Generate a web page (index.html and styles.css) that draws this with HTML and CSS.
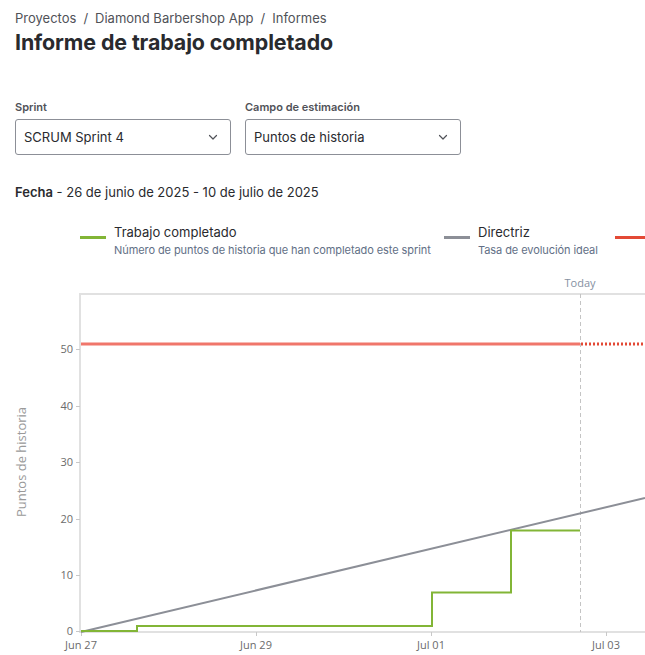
FILE: index.html
```html
<!DOCTYPE html>
<html lang="es">
<head>
<meta charset="utf-8">
<title>Informe de trabajo completado</title>
<link rel="stylesheet" href="styles.css">
</head>
<body>
<div class="page">
  <header class="header">
    <nav class="crumbs">
      <span>Proyectos</span><span class="sep">/</span><span>Diamond Barbershop App</span><span class="sep">/</span><span>Informes</span>
    </nav>
    <h1 class="title">Informe de trabajo completado</h1>
  </header>

  <section class="filters">
    <div class="field">
      <label class="field-label">Sprint</label>
      <div class="select">
        <span>SCRUM Sprint 4</span>
        <svg class="chev" width="12" height="12" viewBox="0 0 12 12"><path d="M2.5 4.5 L6 8 L9.5 4.5" fill="none" stroke="#505258" stroke-width="1.2" stroke-linecap="round" stroke-linejoin="round"/></svg>
      </div>
    </div>
    <div class="field">
      <label class="field-label">Campo de estimación</label>
      <div class="select">
        <span>Puntos de historia</span>
        <svg class="chev" width="12" height="12" viewBox="0 0 12 12"><path d="M2.5 4.5 L6 8 L9.5 4.5" fill="none" stroke="#505258" stroke-width="1.2" stroke-linecap="round" stroke-linejoin="round"/></svg>
      </div>
    </div>
  </section>

  <p class="date"><strong>Fecha</strong> - 26 de junio de 2025 - 10 de julio de 2025</p>

  <div class="legend">
    <div class="legend-item item-1">
      <span class="swatch green"></span>
      <div class="legend-text">
        <div class="legend-title">Trabajo completado</div>
        <div class="legend-sub">Número de puntos de historia que han completado este sprint</div>
      </div>
    </div>
    <div class="legend-item item-2">
      <span class="swatch gray"></span>
      <div class="legend-text">
        <div class="legend-title">Directriz</div>
        <div class="legend-sub">Tasa de evolución ideal</div>
      </div>
    </div>
    <div class="legend-item item-3">
      <span class="swatch red"></span>
    </div>
  </div>
</div>

<svg class="chart" width="645" height="390" viewBox="0 265 645 390">
  <g class="grid">
    <line x1="80" y1="294" x2="645" y2="294" stroke="#e1e1e1" stroke-width="2"/>
    <line x1="80" y1="293" x2="80" y2="633" stroke="#e1e1e1" stroke-width="2"/>
    <line x1="79" y1="632" x2="645" y2="632" stroke="#e1e1e1" stroke-width="2"/>
  </g>
  <g stroke="#c8c8c8" stroke-width="1">
    <line x1="76" y1="631.5" x2="80" y2="631.5"/>
    <line x1="76" y1="575.5" x2="80" y2="575.5"/>
    <line x1="76" y1="519.5" x2="80" y2="519.5"/>
    <line x1="76" y1="462.5" x2="80" y2="462.5"/>
    <line x1="76" y1="406.5" x2="80" y2="406.5"/>
    <line x1="76" y1="349.5" x2="80" y2="349.5"/>
    <line x1="81.5" y1="632" x2="81.5" y2="636"/>
    <line x1="256.5" y1="632" x2="256.5" y2="636"/>
    <line x1="431.5" y1="632" x2="431.5" y2="636"/>
    <line x1="606.5" y1="632" x2="606.5" y2="636"/>
  </g>
  <g class="ylabels">
    <text x="73" y="635">0</text>
    <text x="73" y="579">10</text>
    <text x="73" y="523">20</text>
    <text x="73" y="466">30</text>
    <text x="73" y="410">40</text>
    <text x="73" y="353">50</text>
  </g>
  <g class="xlabels">
    <text x="81" y="649">Jun 27</text>
    <text x="256" y="649">Jun 29</text>
    <text x="431" y="649">Jul 01</text>
    <text x="606" y="649">Jul 03</text>
  </g>
  <text class="ytitle" transform="translate(26 462) rotate(-90)">Puntos de historia</text>

  <line x1="580.5" y1="294" x2="580.5" y2="632" stroke="#c4c4c4" stroke-width="1" stroke-dasharray="4 3"/>
  <text class="today" x="580" y="287">Today</text>

  <line x1="81" y1="344" x2="580" y2="344" stroke="#f0766b" stroke-width="3"/>
  <line x1="581" y1="344" x2="645" y2="344" stroke="#e34935" stroke-width="3" stroke-dasharray="2 2"/>

  <line x1="81" y1="632" x2="645" y2="498" stroke="#8c8f97" stroke-width="2"/>

  <path d="M81 631 H137 V626 H432 V592.5 H511 V530.5 H580" fill="none" stroke="#82b536" stroke-width="2"/>
</svg>
</body>
</html>
```

FILE: styles.css
```css
html, body {
  margin: 0;
  padding: 0;
  background: #ffffff;
  overflow: hidden;
}

body {
  font-family: Inter, "Noto Sans", sans-serif;
  color: #292a2e;
}

.page {
  padding: 8px 15px 0 15px;
}

.crumbs {
  font-size: 13px;
  line-height: 20px;
  color: #505258;
  display: flex;
}

.sep {
  margin: 0 7px;
}

.title {
  margin: 0;
  font-size: 21.4px;
  line-height: 28px;
  font-weight: 700;
  color: #292a2e;
  letter-spacing: -0.1px;
}

.filters {
  display: flex;
  gap: 14px;
  margin-top: 43px;
}

.field {
  display: flex;
  flex-direction: column;
  gap: 4px;
}

.field-label {
  font-size: 11px;
  line-height: 16px;
  font-weight: 600;
  color: #505258;
}

.select {
  width: 216px;
  height: 36px;
  box-sizing: border-box;
  border: 1px solid #8c8f97;
  border-radius: 3px;
  display: flex;
  align-items: center;
  justify-content: space-between;
  padding: 0 11px 0 8px;
  font-size: 13px;
  color: #292a2e;
}

.chev {
  display: block;
}

.date {
  margin: 27px 0 0 0;
  font-size: 13px;
  line-height: 20px;
  color: #292a2e;
}

.date strong {
  font-weight: 600;
}

.legend {
  display: flex;
  margin-top: 21px;
  padding-left: 65px;
  white-space: nowrap;
}

.legend-item {
  display: flex;
  flex: none;
}

.item-1 { width: 364px; }
.item-2 { width: 171px; }

.swatch {
  flex: none;
  width: 26px;
  height: 3px;
  margin-top: 13px;
  margin-right: 8px;
}

.swatch.green { background: #82b536; }
.swatch.gray { background: #8c8f97; }
.swatch.red { background: #e34935; width: 40px; }

.legend-title {
  font-size: 13px;
  line-height: 18px;
  color: #292a2e;
}

.legend-sub {
  font-size: 11px;
  line-height: 16px;
  color: #626f86;
  margin-top: 1px;
  letter-spacing: -0.08px;
}

.chart {
  display: block;
  margin-top: 7px;
}

.chart text {
  font-family: "Open Sans", "Noto Sans", sans-serif;
  font-size: 11px;
  fill: #6b6b6b;
}

.ylabels text {
  text-anchor: end;
}

.xlabels text {
  text-anchor: middle;
}

.chart .ytitle {
  font-size: 13px;
  fill: #9a9a9a;
  text-anchor: middle;
}

.chart .today {
  text-anchor: middle;
  fill: #8590a2;
}
```
